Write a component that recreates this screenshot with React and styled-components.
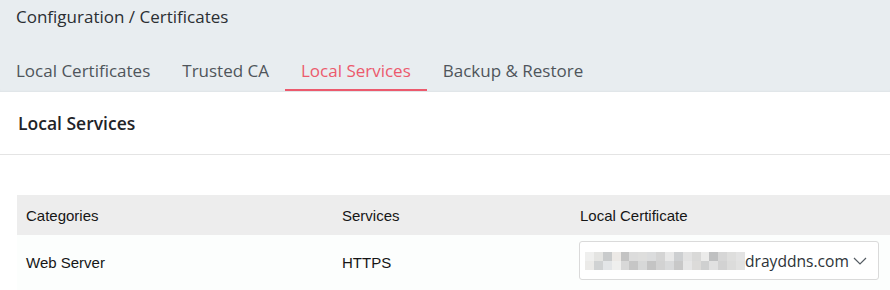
import styled, { createGlobalStyle } from 'styled-components'

const GlobalStyle = createGlobalStyle`
    body {
        margin: 0;
        background: #ffffff;
        font-family: "Open Sans", "Noto Sans", sans-serif;
    }
`

const Page = styled.div`
    width: 890px;
    height: 290px;
    overflow: hidden;
    display: flex;
    flex-direction: column;
`
const TopBar = styled.header`
    background-color: #e8edf0;
    height: 92px;
    display: flex;
    flex-direction: column;
    justify-content: space-between;
    box-shadow: inset 0 -2px 3px -2px rgba(0, 0, 0, 0.08);
`
const Breadcrumb = styled.div`
    padding: 5px 0 0 16px;
    font-size: 17px;
    color: #2b2f33;
`
const Tabs = styled.nav`
    display: flex;
    padding-bottom: 1px;
`
const Tab = styled.a`
    padding: 0 16px 7px;
    font-size: 17px;
    line-height: 22px;
    color: ${p => (p.$active ? '#ec5a6d' : '#4f555b')};
    border-bottom: 2px solid ${p => (p.$active ? '#ec5a6d' : 'transparent')};
    text-decoration: none;
    cursor: pointer;
`
const Panel = styled.section`
    flex: 1;
    background: #ffffff;
`
const PanelHeader = styled.div`
    height: 62px;
    display: flex;
    align-items: center;
    padding-left: 18px;
    border-bottom: 1px solid #e4e4e4;
    font-size: 17.5px;
    font-weight: 600;
    color: #1f2428;
`
const Table = styled.div`
    margin: 40px 0 0 17px;
    display: grid;
    grid-template-columns: 316px 238px 1fr;
    font-family: "Liberation Sans", Arial, sans-serif;
    font-size: 15px;
    color: #161616;
`
const HeadCell = styled.div`
    height: 40px;
    display: flex;
    align-items: center;
    padding-left: 9px;
    background: #ededed;
`
const Cell = styled.div`
    height: 55px;
    display: flex;
    align-items: center;
    padding-left: ${p => p.$pad || '9px'};
    background: #fcfefd;
`
const Select = styled.div`
    width: 300px;
    height: 39px;
    box-sizing: border-box;
    border: 1px solid #dadada;
    border-radius: 3px;
    display: flex;
    align-items: center;
    padding-left: 5px;
    margin-top: -4px;
    background: #ffffff;
    font-family: "Open Sans", "Noto Sans", sans-serif;
    font-size: 15.6px;
    color: #2d3338;
    cursor: pointer;
`
const Mosaic = styled.div`
    display: grid;
    grid-template-columns: repeat(18, 1fr);
    grid-auto-rows: 9px;
    width: 160px;
    flex-shrink: 0;
`
const Block = styled.span`
    background: ${p => p.$c};
`
const Chevron = styled.svg`
    margin-left: 4px;
`

const rowA = ['#efefee', '#e4e4e2', '#c9cbcc', '#ece9e6', '#c3c3c3', '#dcdcdc', '#dededd', '#dbdcdd', '#d4d4d4', '#e8e8e8', '#cdcfd1', '#e2e2e2', '#d9d9d8', '#ebebea', '#bfc0c1', '#d6d6d6', '#dededd', '#e3e3e3']
const rowB = ['#ebeae8', '#d0d2d3', '#e3e5e7', '#efefee', '#d8d8d8', '#c6c6c6', '#d7d8d8', '#c4c4c4', '#d2d2d2', '#d9dadb', '#c8c8c8', '#e6e6e6', '#dcdbd9', '#cfd0d0', '#e1e1e1', '#d2d2d2', '#dcdcdb', '#e2e2e1']

const App = () => {
    return (
        <Page>
            <GlobalStyle />
            <TopBar>
                <Breadcrumb>Configuration / Certificates</Breadcrumb>
                <Tabs>
                    <Tab>Local Certificates</Tab>
                    <Tab>Trusted CA</Tab>
                    <Tab $active>Local Services</Tab>
                    <Tab>Backup &amp; Restore</Tab>
                </Tabs>
            </TopBar>
            <Panel>
                <PanelHeader>Local Services</PanelHeader>
                <Table>
                    <HeadCell>Categories</HeadCell>
                    <HeadCell>Services</HeadCell>
                    <HeadCell>Local Certificate</HeadCell>
                    <Cell>Web Server</Cell>
                    <Cell>HTTPS</Cell>
                    <Cell $pad="8px">
                        <Select>
                            <Mosaic>
                                {[...rowA, ...rowB].map((c, i) => (
                                    <Block key={i} $c={c} />
                                ))}
                            </Mosaic>
                            drayddns.com
                            <Chevron width="14" height="8" viewBox="0 0 14 8">
                                <polyline points="1,1 7,7 13,1" fill="none" stroke="#555c63" strokeWidth="1.2" />
                            </Chevron>
                        </Select>
                    </Cell>
                </Table>
            </Panel>
        </Page>
    )
}

export default App
